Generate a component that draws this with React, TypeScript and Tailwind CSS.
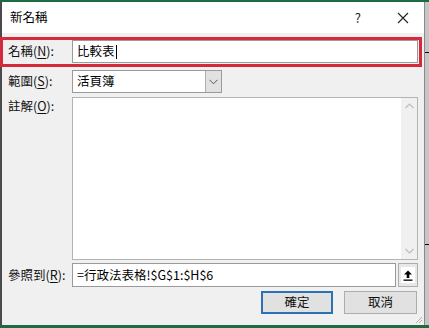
import React from 'react'

const font = { fontFamily: '"Noto Sans CJK TC", "Noto Sans", sans-serif' }

const Label = ({ text, letter, className = '' }: { text: string; letter: string; className?: string }) => (
	<div className={`w-[70px] pl-[6px] text-[12.5px] leading-none text-[#111] ${className}`}>
		{text}(<span className="underline underline-offset-2">{letter}</span>):
	</div>
)

const App = () => {
	return (
		<div className="w-[429px] h-[328px] flex flex-col overflow-hidden bg-[#1f5e3b] relative" style={font}>
			<div className="h-[2px] bg-[#1d6b40]" />
			<div className="flex flex-1">
				<div className="w-[2px] bg-[#4a4a4a]" />
				<div className="flex-1 flex flex-col bg-[#f0f0f0]">
					{/* title bar */}
					<div className="h-[31px] bg-white flex items-center">
						<span className="pl-[8px] text-[12.5px] text-black">新名稱</span>
						<span className="ml-auto mr-[36px] text-[13px] text-[#222]">?</span>
						<svg width="12" height="12" viewBox="0 0 12 12" className="mr-[15px]">
							<path d="M1 1 L11 11 M11 1 L1 11" stroke="#222" strokeWidth="1.1" />
						</svg>
					</div>

					<div className="flex flex-col pr-[6px]">
						{/* name */}
						<div className="flex items-center mt-[7px] h-[23px]">
							<Label text="名稱" letter="N" />
							<div className="flex-1 h-full bg-white border border-[#9a9a9a] flex items-center pl-[4px] text-[12.5px] text-black">
								比較表<span className="w-px h-[14px] bg-black ml-px" />
							</div>
						</div>

						{/* scope */}
						<div className="flex items-center mt-[7px] h-[23px]">
							<Label text="範圍" letter="S" />
							<div className="w-[150px] h-full bg-white border border-[#9a9a9a] flex items-center">
								<span className="flex-1 pl-[4px] text-[12.5px] text-black">活頁簿</span>
								<div className="w-[16px] h-full bg-[#e1e1e1] border-l border-[#adadad] flex items-center justify-center">
									<svg width="9" height="6" viewBox="0 0 9 6">
										<path d="M0.5 0.8 L4.5 4.8 L8.5 0.8" fill="none" stroke="#555" strokeWidth="1" />
									</svg>
								</div>
							</div>
						</div>

						{/* comment */}
						<div className="flex mt-[4px] h-[163px]">
							<Label text="註解" letter="O" className="pt-[3px]" />
							<div className="flex-1 h-full bg-white border border-[#b4b4b4] flex">
								<div className="flex-1" />
								<div className="w-[16px] h-full bg-[#f0f0f0] flex flex-col justify-between items-center py-[5px]">
									<svg width="9" height="6" viewBox="0 0 9 6">
										<path d="M0.5 5 L4.5 1 L8.5 5" fill="none" stroke="#bdbdbd" strokeWidth="1.2" />
									</svg>
									<svg width="9" height="6" viewBox="0 0 9 6">
										<path d="M0.5 1 L4.5 5 L8.5 1" fill="none" stroke="#bdbdbd" strokeWidth="1.2" />
									</svg>
								</div>
							</div>
						</div>

						{/* refers to */}
						<div className="flex items-center mt-[3px] h-[24px]">
							<Label text="參照到" letter="R" />
							<div className="flex-1 h-full bg-white border border-[#9a9a9a] flex items-center pl-[4px] text-[12.5px] text-black">
								=行政法表格!$G$1:$H$6
							</div>
							<div className="w-[20px] h-full ml-[2px] bg-[#e8e8e8] border border-[#adadad] flex items-center justify-center">
								<div className="w-[14px] h-[16px] bg-white flex items-center justify-center">
									<svg width="10" height="11" viewBox="0 0 10 11">
										<path d="M5 0.5 L9 4.5 L6.3 4.5 L6.3 8 L3.7 8 L3.7 4.5 L1 4.5 Z" fill="#000" />
										<rect x="0.5" y="9.5" width="9" height="1.3" fill="#000" />
									</svg>
								</div>
							</div>
						</div>

						{/* buttons */}
						<div className="flex justify-end gap-[11px] mt-[4px] mr-[1px]">
							<button className="w-[72px] h-[23px] bg-[#e1e1e1] border-2 border-[#2b72b5] text-[12.5px] text-[#111]">
								確定
							</button>
							<button className="w-[73px] h-[23px] bg-[#e1e1e1] border border-[#adadad] text-[12.5px] text-[#111]">
								取消
							</button>
						</div>
					</div>

					<div className="flex-1 flex justify-end items-end pr-[1px] pb-[1px]">
						<svg width="9" height="9" viewBox="0 0 9 9">
							<path d="M8 2 L2 8 M8 5 L5 8" stroke="#b0b0b0" strokeWidth="1" />
						</svg>
					</div>
				</div>
				<div className="w-[5px] bg-[#c6c6c6] flex flex-col border-l border-[#8a8a8a]">
					<div className="h-[50px]" />
					<div className="h-px bg-black" />
					<div className="h-[191px]" />
					<div className="h-px bg-black" />
				</div>
			</div>
			<div className="h-[3px] bg-[#1d6b40]" />

			{/* red highlight */}
			<div className="absolute left-0 top-[37px] w-[422px] h-[30px] border-[3px] border-[#d42a3a] pointer-events-none" />
		</div>
	)
}

export default App
